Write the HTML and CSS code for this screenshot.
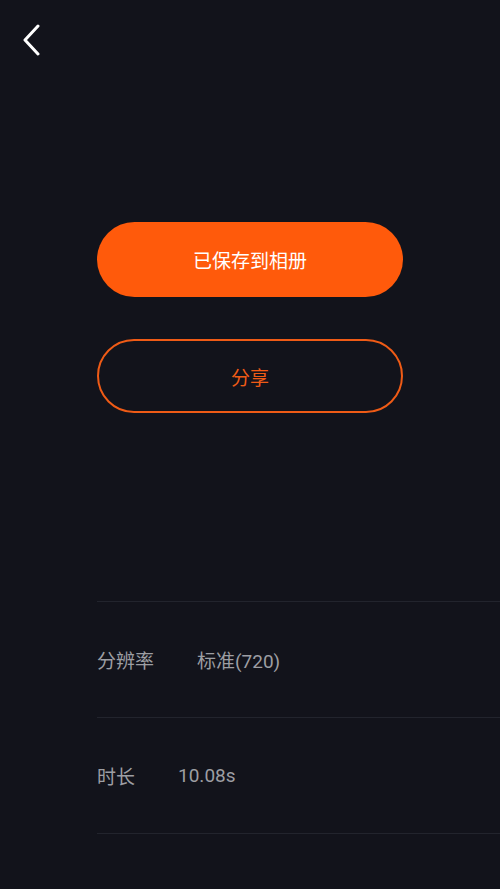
FILE: index.html
```html
<!DOCTYPE html>
<html lang="zh">
<head>
<meta charset="utf-8">
<link rel="stylesheet" href="styles.css">
</head>
<body>
<div class="page">
  <header class="topbar">
    <button class="back" aria-label="返回">
      <svg width="20" height="32" viewBox="0 0 20 32"><path d="M16 2 L3 16 L16 30" fill="none" stroke="#ffffff" stroke-width="3" stroke-linecap="round" stroke-linejoin="round"/></svg>
    </button>
  </header>
  <section class="actions">
    <button class="btn btn-primary">已保存到相册</button>
    <button class="btn btn-outline">分享</button>
  </section>
  <section class="info">
    <div class="row"><span class="label">分辨率</span><span class="value">标准(720)</span></div>
    <div class="row"><span class="label">时长</span><span class="value">10.08s</span></div>
  </section>
</div>
</body>
</html>
```
FILE: styles.css
```css
html, body {
  margin: 0;
  padding: 0;
  background: #12131b;
}
.page {
  width: 500px;
  height: 889px;
  background: #12131b;
  font-family: "Noto Sans CJK SC", "Roboto", sans-serif;
  overflow: hidden;
}
.topbar {
  height: 80px;
  padding: 24px 0 0 22px;
  box-sizing: border-box;
}
.back {
  background: none;
  border: none;
  padding: 0;
  width: 20px;
  height: 32px;
  display: block;
}
.actions {
  display: flex;
  flex-direction: column;
  gap: 42px;
  padding: 142px 0 0 97px;
}
.btn {
  width: 306px;
  height: 75px;
  border-radius: 38px;
  font-family: "Noto Sans CJK SC", sans-serif;
  font-size: 19px;
  box-sizing: border-box;
  padding: 0;
}
.btn-primary {
  background: #ff5a0b;
  border: none;
  color: #ffffff;
}
.btn-outline {
  background: transparent;
  border: 2px solid #ef5b16;
  color: #ef5b16;
  height: 74px;
}
.info {
  margin: 188px 0 0 97px;
  border-top: 1px solid #22242d;
}
.row {
  height: 115px;
  border-bottom: 1px solid #22242d;
  display: flex;
  align-items: center;
  color: #9d9ea3;
  font-size: 19px;
}
.label {
  margin-right: 43px;
}
.value {
  font-family: "Roboto", "Noto Sans CJK SC", sans-serif;
}
```
